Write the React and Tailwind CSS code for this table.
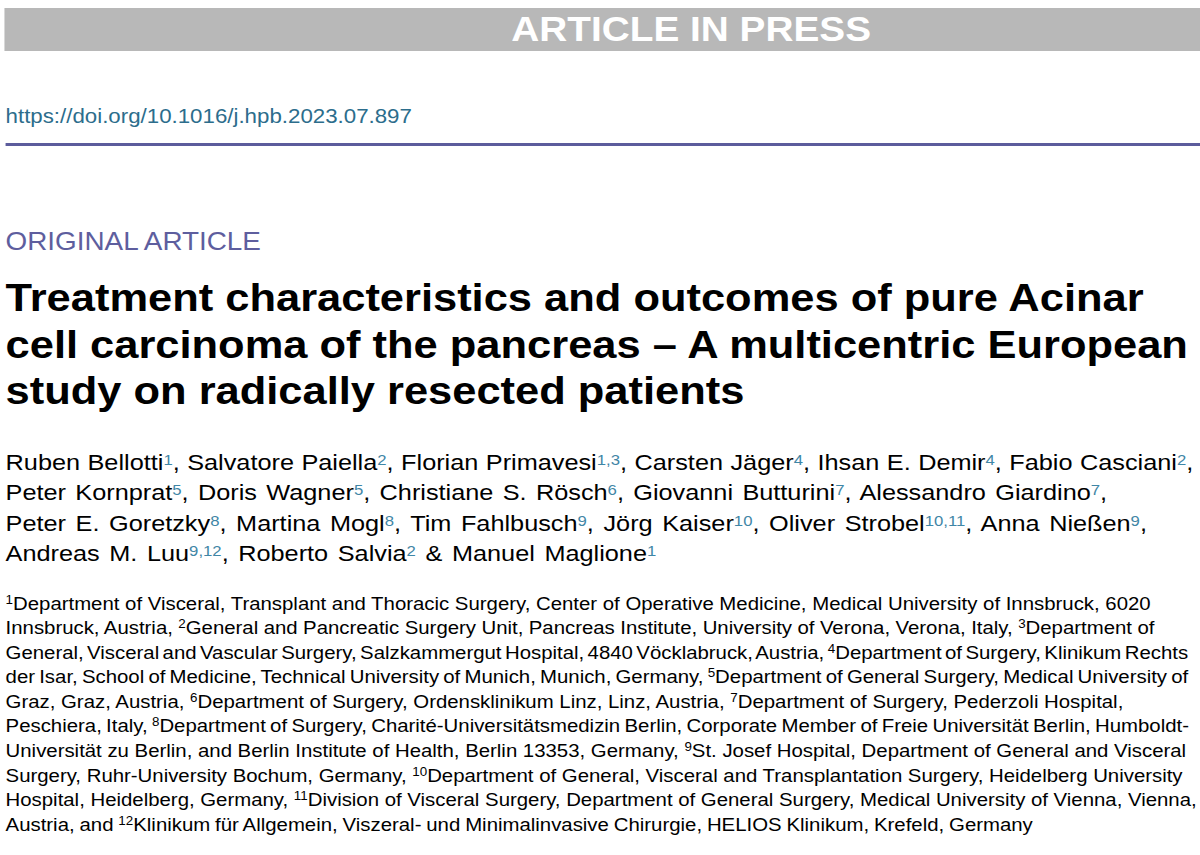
const SANS = "font-['Liberation_Sans',Arial,Helvetica,sans-serif]";

// word spacing per line follows the uneven spacing of the typeset page
const authorLines = [
  {
    ws: "[word-spacing:0.4px]",
    items: [["Ruben Bellotti", "1"], ["Salvatore Paiella", "2"], ["Florian Primavesi", "1,3"], ["Carsten Jäger", "4"], ["Ihsan E. Demir", "4"], ["Fabio Casciani", "2", ","]],
  },
  {
    ws: "[word-spacing:2.1px]",
    items: [["Peter Kornprat", "5"], ["Doris Wagner", "5"], ["Christiane S. Rösch", "6"], ["Giovanni Butturini", "7"], ["Alessandro Giardino", "7", ","]],
  },
  {
    ws: "[word-spacing:2.3px]",
    items: [["Peter E. Goretzky", "8"], ["Martina Mogl", "8"], ["Tim Fahlbusch", "9"], ["Jörg Kaiser", "10"], ["Oliver Strobel", "10,11"], ["Anna Nießen", "9", ","]],
  },
];

const affLines = [
  { ws: "", parts: [["1", "Department of Visceral, Transplant and Thoracic Surgery, Center of Operative Medicine, Medical University of Innsbruck, 6020"]] },
  { ws: "[word-spacing:-0.2px]", parts: [["", "Innsbruck, Austria, "], ["2", "General and Pancreatic Surgery Unit, Pancreas Institute, University of Verona, Verona, Italy, "], ["3", "Department of"]] },
  { ws: "[word-spacing:-2px]", parts: [["", "General, Visceral and Vascular Surgery, Salzkammergut Hospital, 4840 Vöcklabruck, Austria, "], ["4", "Department of Surgery, Klinikum Rechts"]] },
  { ws: "[word-spacing:-1.3px]", parts: [["", "der Isar, School of Medicine, Technical University of Munich, Munich, Germany, "], ["5", "Department of General Surgery, Medical University of"]] },
  { ws: "", parts: [["", "Graz, Graz, Austria, "], ["6", "Department of Surgery, Ordensklinikum Linz, Linz, Austria, "], ["7", "Department of Surgery, Pederzoli Hospital,"]] },
  { ws: "[word-spacing:-1.2px]", parts: [["", "Peschiera, Italy, "], ["8", "Department of Surgery, Charité-Universitätsmedizin Berlin, Corporate Member of Freie Universität Berlin, Humboldt-"]] },
  { ws: "", parts: [["", "Universität zu Berlin, and Berlin Institute of Health, Berlin 13353, Germany, "], ["9", "St. Josef Hospital, Department of General and Visceral"]] },
  { ws: "", parts: [["", "Surgery, Ruhr-University Bochum, Germany, "], ["10", "Department of General, Visceral and Transplantation Surgery, Heidelberg University"]] },
  { ws: "", parts: [["", "Hospital, Heidelberg, Germany, "], ["11", "Division of Visceral Surgery, Department of General Surgery, Medical University of Vienna, Vienna,"]] },
  { ws: "[word-spacing:-0.7px]", parts: [["", "Austria, and "], ["12", "Klinikum für Allgemein, Viszeral- und Minimalinvasive Chirurgie, HELIOS Klinikum, Krefeld, Germany"]] },
];

function Sup({ children }) {
  return <sup className="relative -top-[5px] text-[15px] text-[#3f86a6]">{children}</sup>;
}

function AuthorLine({ items, ws }) {
  return (
    <div className={`whitespace-nowrap ${ws}`}>
      {items.map(([name, aff, end], i) => (
        <span key={name}>
          {name}
          <Sup>{aff}</Sup>
          {end ?? (i < items.length - 1 ? ", " : "")}
        </span>
      ))}
    </div>
  );
}

export default function App() {
  return (
    <div className={`h-[855px] w-[1200px] overflow-hidden bg-white ${SANS}`}>
      {/* the page scan is a bit wider than tall, so stretch the column */}
      <div className="w-[1078px] origin-top-left scale-x-[1.114]">
        {/* banner */}
        <div className="pt-[8px] pl-[4px]">
          <div className="flex h-[43px] items-center bg-[#b8b8b8] pl-[455px]">
            <span className="text-[34.8px] font-bold leading-none text-white">ARTICLE IN PRESS</span>
          </div>
        </div>

        {/* doi */}
        <div className="mt-[54px] pl-[5px] text-[20px] leading-[22px] text-[#2c6d8c]">https://doi.org/10.1016/j.hpb.2023.07.897</div>
        <div className="mt-[16px] ml-[5px] h-[3px] bg-[#5c5c9c]" />

        {/* heading */}
        <div className="mt-[80px] pl-[5px] text-[25px] leading-[30px] text-[#5e5e9e]">ORIGINAL ARTICLE</div>
        <h1 className="mt-[19px] pl-[5px] text-[39px] font-bold leading-[46.5px] text-black">
          <div className="whitespace-nowrap">Treatment characteristics and outcomes of pure Acinar</div>
          <div className="whitespace-nowrap">cell carcinoma of the pancreas – A multicentric European</div>
          <div className="whitespace-nowrap">study on radically resected patients</div>
        </h1>

        {/* authors */}
        <div className="mt-[32px] pl-[5px] text-[22.7px] leading-[30.5px] text-black">
          {authorLines.map((l, i) => (
            <AuthorLine key={i} items={l.items} ws={l.ws} />
          ))}
          <div className="whitespace-nowrap [word-spacing:2.3px]">
            Andreas M. Luu<Sup>9,12</Sup>, Roberto Salvia<Sup>2</Sup> &amp; Manuel Maglione<Sup>1</Sup>
          </div>
        </div>

        {/* affiliations */}
        <div className="mt-[23px] pl-[5px] text-[18.3px] leading-[24.6px] text-black">
          {affLines.map((line, i) => (
            <div key={i} className={`whitespace-nowrap ${line.ws}`}>
              {line.parts.map(([n, t], j) => (
                <span key={j}>
                  {n && <sup className="text-[12px]">{n}</sup>}
                  {t}
                </span>
              ))}
            </div>
          ))}
        </div>
      </div>
    </div>
  );
}
